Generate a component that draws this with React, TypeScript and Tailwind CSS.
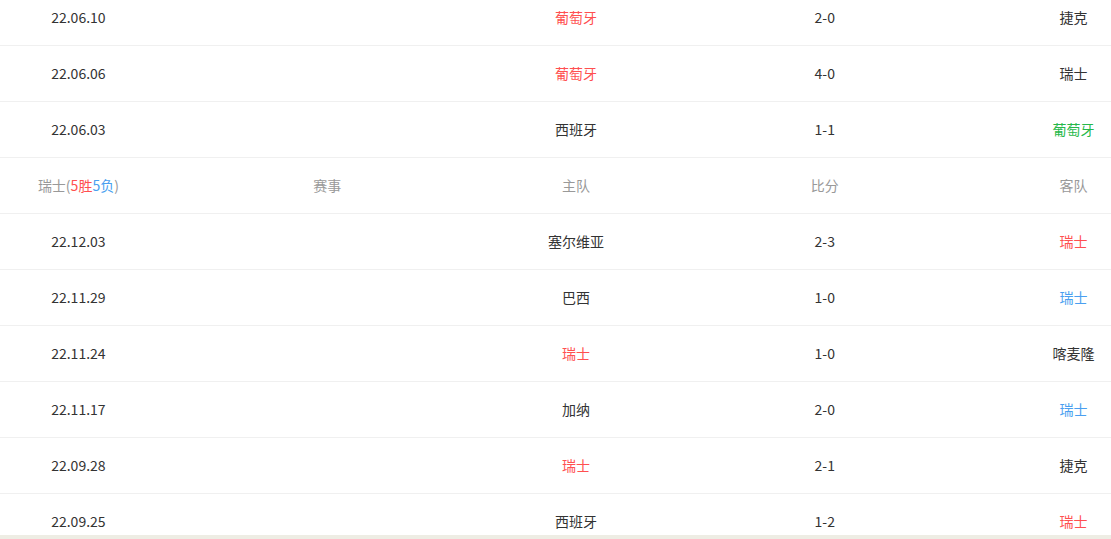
type Tone = "dark" | "red" | "blue" | "green";

interface Match {
  date: string;
  home: string;
  homeTone: Tone;
  score: string;
  away: string;
  awayTone: Tone;
}

const toneClass: Record<Tone, string> = {
  dark: "text-[#333333]",
  red: "text-[#ff5050]",
  blue: "text-[#4a9ff0]",
  green: "text-[#27b84a]",
};

const portugal: Match[] = [
  { date: "22.06.10", home: "葡萄牙", homeTone: "red", score: "2-0", away: "捷克", awayTone: "dark" },
  { date: "22.06.06", home: "葡萄牙", homeTone: "red", score: "4-0", away: "瑞士", awayTone: "dark" },
  { date: "22.06.03", home: "西班牙", homeTone: "dark", score: "1-1", away: "葡萄牙", awayTone: "green" },
];

const swiss: Match[] = [
  { date: "22.12.03", home: "塞尔维亚", homeTone: "dark", score: "2-3", away: "瑞士", awayTone: "red" },
  { date: "22.11.29", home: "巴西", homeTone: "dark", score: "1-0", away: "瑞士", awayTone: "blue" },
  { date: "22.11.24", home: "瑞士", homeTone: "red", score: "1-0", away: "喀麦隆", awayTone: "dark" },
  { date: "22.11.17", home: "加纳", homeTone: "dark", score: "2-0", away: "瑞士", awayTone: "blue" },
  { date: "22.09.28", home: "瑞士", homeTone: "red", score: "2-1", away: "捷克", awayTone: "dark" },
  { date: "22.09.25", home: "西班牙", homeTone: "dark", score: "1-2", away: "瑞士", awayTone: "red" },
];

function Row({ m }: { m: Match }) {
  return (
    <div className="grid grid-cols-5 h-14 items-center text-center border-b border-[#f0f0f0]">
      <span className="text-[#333333]">{m.date}</span>
      <span></span>
      <span className={toneClass[m.homeTone]}>{m.home}</span>
      <span className="text-[#333333]">{m.score}</span>
      <span className={toneClass[m.awayTone]}>{m.away}</span>
    </div>
  );
}

export default function App() {
  return (
    <div
      className="flex flex-col h-[539px] w-[1111px] overflow-hidden bg-white text-[14px]"
      style={{ fontFamily: '"Noto Sans CJK SC", "Noto Sans", sans-serif' }}
    >
      {/* Scrolled table */}
      <div className="flex-1 overflow-hidden">
        <div className="w-[1244px] -ml-[46px] -mt-[10px]">
          {portugal.map((m) => (
            <Row key={m.date} m={m} />
          ))}

          {/* Swiss header */}
          <div className="grid grid-cols-5 h-14 items-center text-center border-b border-[#f0f0f0] text-[#999999]">
            <span>
              瑞士(<span className="text-[#ff5050]">5胜</span>
              <span className="text-[#4a9ff0]">5负</span>)
            </span>
            <span>赛事</span>
            <span>主队</span>
            <span>比分</span>
            <span>客队</span>
          </div>

          {swiss.map((m) => (
            <Row key={m.date} m={m} />
          ))}
        </div>
      </div>

      {/* Footer strip */}
      <div className="h-1 flex-shrink-0 bg-[#eeede4]" />
    </div>
  );
}
